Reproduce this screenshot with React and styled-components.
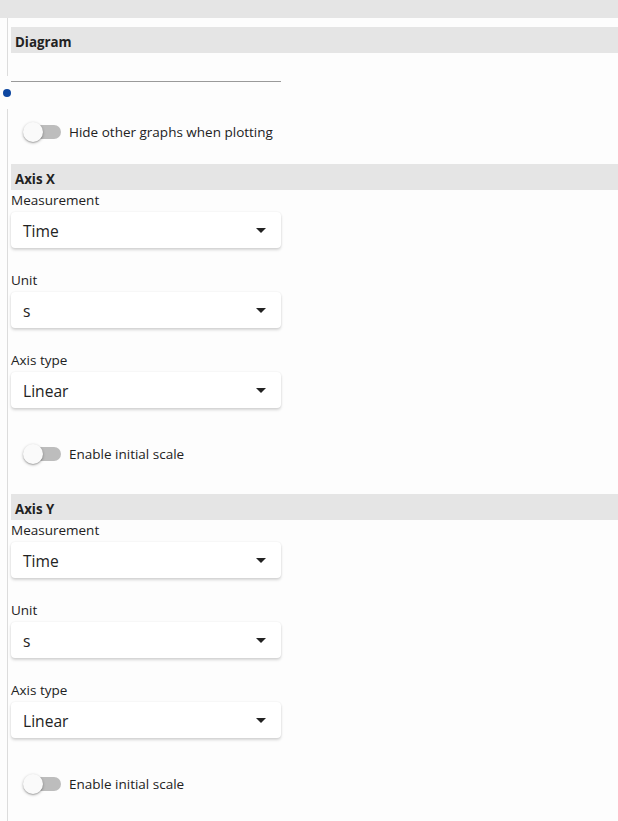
import React from 'react';
import styled, { createGlobalStyle } from 'styled-components';

const GlobalStyle = createGlobalStyle`
  body {
    margin: 0;
    background: #fdfdfd;
    font-family: "Open Sans", "Liberation Sans", sans-serif;
    color: #222;
  }
`;

const axes = [
    { name: 'Axis X', measurement: 'Time', unit: 's', type: 'Linear' },
    { name: 'Axis Y', measurement: 'Time', unit: 's', type: 'Linear' },
];

const App = () => {
    return (
        <Page>
            <GlobalStyle />
            <TopBar />
            <Rail>
                <Header>Diagram</Header>
                <Spacer />
            </Rail>
            <Underline />
            <Dot />
            <Rail $grow>
                <Toggle label="Hide other graphs when plotting" $top={13} />
                {axes.map((axis) => (
                    <AxisBlock key={axis.name} axis={axis} />
                ))}
            </Rail>
        </Page>
    );
};

const AxisBlock = ({ axis }) => (
    <Block>
        <Header>{axis.name}</Header>
        <Field label="Measurement" value={axis.measurement} />
        <Field label="Unit" value={axis.unit} />
        <Field label="Axis type" value={axis.type} />
        <Toggle label="Enable initial scale" $top={36} />
    </Block>
);

const Field = ({ label, value }) => (
    <FieldWrap>
        <Label>{label}</Label>
        <Select>
            <span>{value}</span>
            <Arrow />
        </Select>
    </FieldWrap>
);

const Toggle = ({ label, $top }) => (
    <ToggleRow $top={$top}>
        <Switch>
            <Track />
            <Thumb />
        </Switch>
        <ToggleLabel>{label}</ToggleLabel>
    </ToggleRow>
);

const Page = styled.div`
  width: 618px;
  min-height: 821px;
  display: flex;
  flex-direction: column;
`;

const TopBar = styled.div`
  height: 18px;
  background: #e5e5e5;
`;

const Rail = styled.div`
  margin-left: 7px;
  padding-left: 3px;
  border-left: 1px solid #dcdcdc;
  padding-top: ${(p) => (p.$grow ? '0' : '9px')};
  flex: ${(p) => (p.$grow ? '1' : 'none')};
`;

const Header = styled.div`
  height: 24px;
  padding: 2px 0 0 4px;
  line-height: 26px;
  background: #e5e5e5;
  font-size: 13.3px;
  font-weight: 700;
  color: #222;
  overflow: hidden;
`;

const Spacer = styled.div`
  height: 23px;
`;

const Underline = styled.div`
  margin: 5px 0 0 11px;
  width: 270px;
  height: 1px;
  background: #9a9a9a;
`;

const Dot = styled.div`
  margin: 7px 0 0 3px;
  width: 8px;
  height: 8px;
  border-radius: 50%;
  background: #0d47a1;
  margin-bottom: 12px;
`;

const Block = styled.div`
  margin-top: 22px;
  & + & {
    margin-top: 30px;
  }
`;

const FieldWrap = styled.div`
  & + & {
    margin-top: 22px;
  }
`;

const Label = styled.div`
  height: 20px;
  line-height: 20px;
  font-size: 13.5px;
  margin-bottom: 2px;
`;

const Select = styled.div`
  width: 270px;
  height: 36px;
  box-sizing: border-box;
  padding: 1px 15px 0 12px;
  display: flex;
  align-items: center;
  justify-content: space-between;
  background: #fff;
  border-radius: 4px;
  box-shadow: 0 2px 3px rgba(0, 0, 0, 0.16), 0 0 2px rgba(0, 0, 0, 0.08);
  font-size: 15.6px;
  color: #222;
`;

const Arrow = styled.div`
  width: 0;
  height: 0;
  border-left: 5px solid transparent;
  border-right: 5px solid transparent;
  border-top: 5px solid #222;
`;

const ToggleRow = styled.div`
  margin-top: ${(p) => p.$top}px;
  height: 20px;
  display: flex;
  align-items: center;
  padding-left: 12px;
`;

const Switch = styled.div`
  position: relative;
  width: 38px;
  height: 20px;
`;

const Track = styled.div`
  position: absolute;
  left: 5px;
  top: 3px;
  width: 33px;
  height: 14px;
  border-radius: 7px;
  background: #bdbdbd;
`;

const Thumb = styled.div`
  position: absolute;
  left: 0;
  top: 0;
  width: 20px;
  height: 20px;
  border-radius: 50%;
  background: #fafafa;
  box-shadow: 0 1px 3px rgba(0, 0, 0, 0.3), 0 1px 1px rgba(0, 0, 0, 0.14);
`;

const ToggleLabel = styled.span`
  margin-left: 8px;
  font-size: 13.5px;
  color: #222;
`;

export default App;
